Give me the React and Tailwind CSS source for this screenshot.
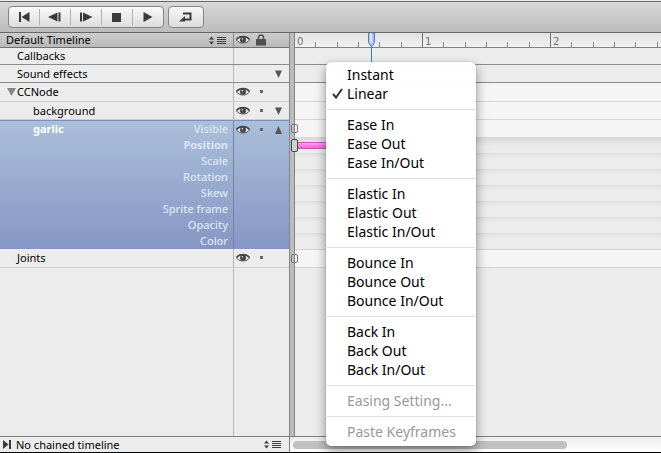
import React from 'react';

const properties = ['Visible', 'Position', 'Scale', 'Rotation', 'Skew', 'Sprite frame', 'Opacity', 'Color'];

const menuGroups = [
  ['Instant', 'Linear'],
  ['Ease In', 'Ease Out', 'Ease In/Out'],
  ['Elastic In', 'Elastic Out', 'Elastic In/Out'],
  ['Bounce In', 'Bounce Out', 'Bounce In/Out'],
  ['Back In', 'Back Out', 'Back In/Out'],
  ['Easing Setting...'],
  ['Paste Keyframes'],
];

const transport = [
  {
    label: 'Rewind',
    shape: <path d="M2 1h2v10H2zM12.500 1v10L4.500 6z" />,
  },
  {
    label: 'Step back',
    shape: <path d="M9.500 1.500v9L0 6zM10.500 1.500h2v9h-2z" />,
  },
  {
    label: 'Step forward',
    shape: <path d="M1 1.500h2v9H1zM4 1.500v9L13.500 6z" />,
  },
  { label: 'Stop', shape: <path d="M2 2h9v9H2z" /> },
  { label: 'Play', shape: <path d="M2.500 1v10l9-5z" /> },
];

function Eye() {
  return (
    <svg width="14" height="10" viewBox="0 0 14 10" aria-hidden="true">
      <path d="M0.500 5C3 1 10.500 0.500 13.500 5C10.500 9 3.500 9 0.500 5Z" fill="#e4e4e4" stroke="#555" strokeWidth="1" />
      <path d="M0.500 4.300C3.500 0.500 10.500 0.500 13.500 4.300" fill="none" stroke="#444" strokeWidth="1.400" />
      <circle cx="7" cy="4.800" r="3" fill="#484848" />
      <circle cx="6.300" cy="3.700" r="0.800" fill="#ddd" />
    </svg>
  );
}

function Lock() {
  return (
    <svg width="10" height="12" viewBox="0 0 10 12" aria-hidden="true">
      <path d="M2.500 6V3.500a2.500 2.500 0 0 1 5 0V6" fill="none" stroke="#505050" strokeWidth="1.500" />
      <rect x="0" y="5" width="10" height="6.500" rx="0.500" fill="#505050" />
    </svg>
  );
}

function ListIcon() {
  return (
    <svg width="17" height="9" viewBox="0 0 17 9" className="pointer-events-none shrink-0" fill="#3c3c3c" aria-hidden="true">
      <path d="M0 3.500L2.500 0.500L5 3.500zM0 5.500L2.500 8.500L5 5.500z" />
      <path d="M8 1h9v1H8zM8 3h9v1H8zM8 5h9v1H8zM8 7h9v1H8z" />
    </svg>
  );
}

function Arrow({ up }) {
  return (
    <svg width="7" height="8" viewBox="0 0 7 8" fill="#555" aria-hidden="true">
      {up ? <path d="M3.500 0L7 8H0z" /> : <path d="M0 0.500h7L3.500 8z" />}
    </svg>
  );
}

function Controls({ name, eye, arrow }) {
  return (
    <div className="grid h-[17px] w-[55px] shrink-0 grid-cols-[18px_18px_16px] items-center">
      <span className="flex justify-center">
        {eye && <button type="button" aria-label={`Toggle visibility of ${name}`}><Eye /></button>}
      </span>
      <span className="flex justify-center">
        {eye && <button type="button" aria-label={`Lock ${name}`} className="size-[3px] bg-[#666]" />}
      </span>
      <span className="flex justify-center">
        {arrow && <button type="button" aria-label={`Expand ${name}`}><Arrow up={arrow === 'up'} /></button>}
      </span>
    </div>
  );
}

function Row({ name, indent, line, eye, arrow, open }) {
  return (
    <div className={`flex border-b ${line}`}>
      <div className={`flex min-w-0 flex-1 items-center ${indent}`}>
        {open && (
          <button type="button" aria-label={`Collapse ${name}`} className="mr-px">
            <svg width="9" height="8" viewBox="0 0 9 8" fill="#858585" aria-hidden="true"><path d="M0 0h9L4.500 8z" /></svg>
          </button>
        )}
        <span>{name}</span>
      </div>
      <div className="border-l border-[#b4b4b4]"><Controls name={name} eye={eye} arrow={arrow} /></div>
    </div>
  );
}

function Sidebar() {
  return (
    <section aria-label="Nodes" className="flex w-[289px] shrink-0 flex-col bg-[#ececec]">
      <div className="flex h-[15px] border-b border-[#707070] bg-linear-to-b from-[#cdcdcd] to-[#b9b9b9]">
        <div className="flex min-w-0 flex-1 items-center pr-[7px] pl-[6px]">
          <select aria-label="Timeline" className="h-[14px] min-w-0 flex-1 appearance-none bg-transparent leading-[14px]">
            <option>Default Timeline</option>
          </select>
          <ListIcon />
        </div>
        <div className="grid w-[56px] grid-cols-[18px_18px_16px] items-center justify-items-center border-l border-[#8e8e8e]">
          <Eye />
          <Lock />
        </div>
      </div>
      <Row name="Callbacks" indent="pl-[17px]" line="h-[17px] border-[#8a8a8a]" />
      <Row name="Sound effects" indent="pl-[17px]" line="h-[18px] border-[#8a8a8a]" arrow="down" />
      <Row name="CCNode" indent="pl-[7px]" line="h-[19px] border-[#d0d0d0]" eye open />
      <Row name="background" indent="pl-[33px]" line="h-[18px] border-[#d0d0d0]" eye arrow="down" />
      <div className="flex border-t border-[#7d91c0] bg-linear-to-b from-[#aabfda] to-[#8696c4]">
        <div className="flex min-w-0 flex-1 justify-between pr-[5px] pl-[33px]">
          <span className="h-4 font-bold leading-4 text-white">garlic</span>
          <ul className="text-right leading-4 text-[#dde5f1]">
            {properties.map((p) => (
              <li key={p} className={p === 'Position' ? 'font-bold' : 'font-medium'}>{p}</li>
            ))}
          </ul>
        </div>
        <div className="border-l border-[#7283a8]"><Controls name="garlic" eye arrow="up" /></div>
      </div>
      <Row name="Joints" indent="pl-[17px]" line="h-[19px] border-[#d0d0d0]" eye />
      <div className="flex flex-1 justify-end">
        <div className="w-[56px] border-l border-[#b4b4b4]" />
      </div>
    </section>
  );
}

function Ruler() {
  return (
    <div className="flex h-[15px] shrink-0 overflow-hidden border-b border-[#808080] bg-linear-to-b from-[#e2e2e2] to-[#f2f2f2]">
      {[0, 1, 2].map((unit) => (
        <div key={unit} className="relative grid w-32 shrink-0 grid-cols-6 items-end">
          <span className="absolute top-[2px] left-[2px] font-['DejaVu_Sans',sans-serif] text-[10px] leading-[14px] text-[#707070]">{unit}</span>
          {[1, 2, 3, 4, 5].map((t) => (
            <span key={t} className="h-[5px] border-r border-[#888]" />
          ))}
          <span className="h-[14px] border-r border-[#707070]" />
        </div>
      ))}
      <svg className="absolute top-0 left-[72px]" width="9" height="30" viewBox="0 0 9 30" aria-hidden="true">
        <path d="M4 13h1v17H4z" fill="#1c86dc" />
        <path d="M1.500 0h6v9.500L4.500 14L1.500 9.500z" fill="#a9c4f5" stroke="#5a7bc0" strokeWidth="1" />
        <path d="M3 0h2v10H3z" fill="#dbe7ff" />
      </svg>
    </div>
  );
}

function Tracks() {
  return (
    <section aria-label="Keyframes" className="relative flex min-w-0 flex-1 flex-col bg-[#ececec]">
      <Ruler />
      <div className="h-[17px] border-b border-[#8a8a8a]" />
      <div className="h-[18px] border-b border-[#8a8a8a]" />
      <div className="h-[19px] border-b border-[#d6d6d6] bg-[#f5f5f5]" />
      <div className="h-[18px] border-b border-[#d6d6d6] bg-[#f5f5f5]" />
      <div className="relative h-[17px] bg-[#f5f5f5]">
        <button type="button" aria-label="Visible keyframe" className="absolute top-[4px] -left-[4px] h-[9px] w-[7px] rounded-xs border border-[#777]" />
      </div>
      <div className="relative flex h-4 items-center bg-linear-to-b from-[#d8d8d8] to-[#ececec] to-60%">
        <div className="h-[7px] w-20 border-y border-[#c95bb8] bg-linear-to-b from-[#ff9cf0] to-[#f562dc]" />
        <button type="button" aria-label="Position keyframe" className="absolute top-[2px] -left-[4px] h-[13px] w-[7px] rounded-xs border border-[#444] bg-[#d0d0d0]" />
      </div>
      {properties.slice(2).map((p) => (
        <div key={p} className="h-4 bg-linear-to-b from-[#dddddd] to-[#ececec] to-30%" />
      ))}
      <div className="relative h-[19px] border-y border-[#d6d6d6] bg-[#f5f5f5]">
        <button type="button" aria-label="Joints keyframe" className="absolute top-[4px] -left-[4px] h-[9px] w-[7px] rounded-xs border border-[#777]" />
      </div>
    </section>
  );
}

function EasingMenu() {
  return (
    <div
      role="menu"
      className="absolute top-[62px] left-[326px] w-[150px] rounded-[5px] bg-white/98 pt-[3px] pb-[5px] text-[14px] text-black shadow-[0_5px_12px_rgba(0,0,0,0.4),0_0_1px_rgba(0,0,0,0.6)]"
    >
      {menuGroups.map((items, g) => (
        <div
          key={items[0]}
          role="group"
          className={g ? 'mx-px mt-[6px] border-t border-[#e0e0e0] pt-[5px]' : 'mx-px'}
        >
          {items.map((item) => (
            <button
              key={item}
              type="button"
              role={g < 5 ? 'menuitemradio' : 'menuitem'}
              aria-checked={g < 5 ? item === 'Linear' : undefined}
              disabled={g > 4}
              className="flex h-[19px] w-full items-center whitespace-nowrap leading-[19px] disabled:text-[#999]"
            >
              <span className="w-5 pl-[5px]">
                {item === 'Linear' && (
                  <svg width="11" height="11" viewBox="0 0 11 11" fill="none" stroke="#333" strokeWidth="2" aria-hidden="true">
                    <path d="M1 6L4 9.500L10 1" />
                  </svg>
                )}
              </span>
              {item}
            </button>
          ))}
        </div>
      ))}
    </div>
  );
}

export default function App() {
  return (
    <div className="relative flex h-screen flex-col overflow-hidden border-b border-black bg-[#ececec] font-['Noto_Sans','Open_Sans',sans-serif] text-[11px] leading-4 text-black">
      <header className="mt-px flex h-8 shrink-0 items-center gap-1 border-y border-[#686868] bg-linear-to-b from-[#d8d8d8] to-[#bcbcbc] px-2">
        <div className="flex h-[22px] w-[156px] divide-x divide-[#b0b0b0] rounded-sm border border-[#858585] bg-linear-to-b from-[#fafafa] to-[#dcdcdc]">
          {transport.map((t) => (
            <button key={t.label} type="button" aria-label={t.label} className="my-[2px] flex flex-1 items-center justify-center">
              <svg width="14" height="12" viewBox="0 0 14 12" fill="#3a3a3a" aria-hidden="true">{t.shape}</svg>
            </button>
          ))}
        </div>
        <button type="button" aria-label="Loop" className="flex h-[22px] w-9 items-center justify-center rounded-sm border border-[#858585] bg-linear-to-b from-[#f6f6f6] to-[#dcdcdc]">
          <svg width="14" height="12" viewBox="0 0 14 12" aria-hidden="true">
            <path d="M4 2.500H11.500V8.500H5" fill="none" stroke="#3a3a3a" strokeWidth="2" />
            <path d="M0 10.500L6 5V10.500z" fill="#3a3a3a" />
          </svg>
        </button>
      </header>
      <main className="flex min-h-0 flex-1">
        <Sidebar />
        <div className="w-[6px] shrink-0 border-x border-[#848484] bg-[#bcbcbc]" />
        <Tracks />
      </main>
      <footer className="flex h-4 shrink-0 border-t border-[#808080]">
        <div className="flex w-[290px] shrink-0 items-center border-r border-[#808080] pr-2 pl-[3px]">
          <svg width="9" height="9" viewBox="0 0 9 9" fill="#3a3a3a" aria-hidden="true"><path d="M0 0v9l5.500-4.500zM6 0h2v9H6z" /></svg>
          <select aria-label="Chained timeline" className="h-[14px] min-w-0 flex-1 appearance-none bg-transparent pl-1 leading-[14px]">
            <option>No chained timeline</option>
          </select>
          <ListIcon />
        </div>
        <div className="flex min-w-0 flex-1 items-center bg-linear-to-b from-[#ededed] to-white px-[3px]">
          <div role="scrollbar" aria-controls="root" aria-valuenow={0} className="h-2 w-3/4 rounded-full bg-[#c1c1c1]" />
        </div>
      </footer>
      <EasingMenu />
    </div>
  );
}
